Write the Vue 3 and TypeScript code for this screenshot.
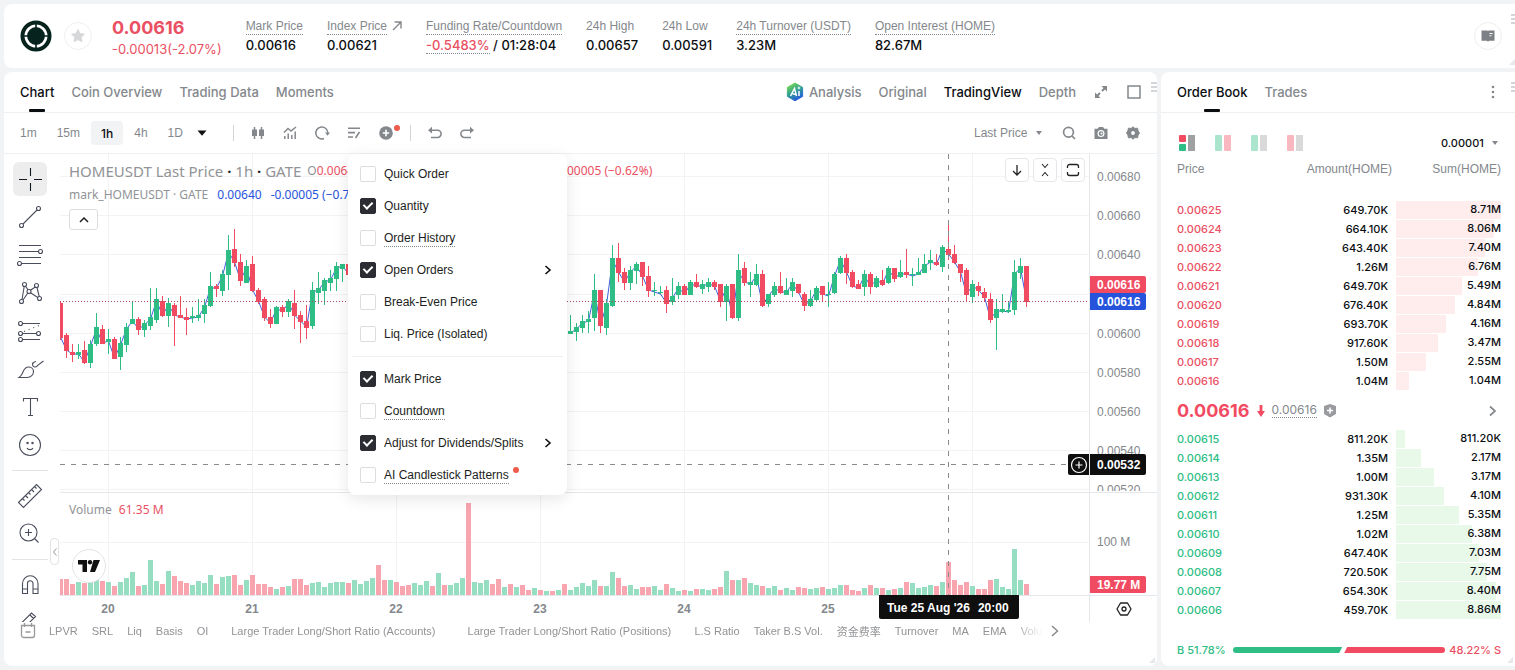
<script setup lang="ts">
import { ref } from 'vue'

type Candle = [dir: 'g' | 'r', top: number, bottom: number, high: number, low: number]

const PITCH = 6
const LAST_VISIBLE_START = 85

// Candle extents, in thirds of a pixel measured from 4px above the price pane.
const early: Candle[] = [
  ['r', 458, 564, 455, 570], ['r', 555, 602, 549, 624], ['r', 605, 615, 582, 636], ['g', 605, 615, 582, 628],
  ['r', 600, 638, 573, 641], ['g', 581, 639, 570, 654], ['g', 531, 582, 489, 587], ['r', 537, 582, 525, 582],
  ['g', 567, 576, 537, 612], ['r', 567, 627, 560, 627], ['g', 579, 621, 560, 660], ['g', 531, 584, 519, 605],
  ['g', 507, 522, 456, 522], ['r', 507, 540, 500, 555], ['g', 519, 540, 510, 560], ['g', 501, 528, 414, 540],
  ['g', 447, 510, 414, 518], ['r', 453, 498, 438, 500], ['g', 459, 498, 444, 530], ['r', 465, 498, 459, 588],
  ['r', 495, 503, 438, 503], ['r', 501, 510, 474, 555], ['g', 499, 504, 471, 519], ['g', 495, 504, 447, 513],
  ['g', 465, 492, 447, 518], ['g', 408, 467, 366, 470], ['r', 408, 417, 402, 440], ['g', 372, 423, 360, 438],
  ['g', 300, 375, 255, 420], ['r', 297, 339, 237, 350], ['r', 336, 393, 312, 408], ['g', 348, 399, 330, 399],
  ['r', 342, 423, 318, 426], ['r', 420, 457, 414, 462], ['r', 447, 504, 441, 513], ['r', 501, 522, 477, 534],
  ['g', 471, 522, 468, 522], ['r', 471, 486, 465, 500], ['g', 453, 486, 447, 500], ['r', 459, 498, 420, 536],
  ['r', 495, 515, 483, 579], ['r', 513, 534, 465, 567], ['g', 420, 528, 396, 537], ['g', 414, 428, 366, 462],
  ['g', 390, 423, 384, 465], ['g', 384, 398, 360, 423], ['g', 348, 386, 336, 423], ['g', 342, 357, 342, 396],
  ['r', 342, 375, 342, 390],
]
const late: Candle[] = [
  ['g', 543, 551, 495, 551], ['g', 531, 546, 519, 573], ['g', 512, 534, 495, 549], ['g', 507, 516, 483, 548],
  ['g', 420, 504, 372, 543], ['r', 420, 528, 420, 549], ['g', 459, 534, 447, 555], ['g', 324, 467, 285, 470],
  ['r', 324, 369, 279, 396], ['r', 366, 399, 354, 420], ['g', 360, 399, 348, 420], ['g', 342, 363, 336, 402],
  ['r', 336, 380, 336, 408], ['r', 378, 423, 348, 440], ['g', 419, 423, 396, 438], ['g', 426, 429, 408, 432],
  ['r', 420, 462, 408, 489], ['g', 438, 456, 384, 465], ['g', 408, 435, 396, 447], ['r', 408, 435, 402, 435],
  ['g', 396, 435, 390, 435], ['r', 396, 411, 372, 413], ['g', 402, 417, 390, 432], ['g', 396, 411, 384, 426],
  ['r', 396, 411, 390, 420], ['r', 402, 456, 402, 471], ['g', 408, 456, 402, 513], ['r', 402, 504, 402, 507],
  ['g', 360, 504, 312, 513], ['r', 354, 399, 336, 408], ['g', 395, 405, 366, 441], ['g', 372, 405, 342, 407],
  ['r', 372, 468, 360, 470], ['g', 432, 462, 432, 471], ['g', 408, 435, 396, 441], ['r', 408, 429, 366, 432],
  ['g', 420, 435, 384, 435], ['g', 396, 423, 384, 441], ['r', 402, 429, 402, 432], ['r', 432, 468, 426, 483],
  ['g', 447, 468, 420, 470], ['g', 414, 450, 408, 456], ['r', 408, 435, 408, 456], ['g', 431, 435, 396, 471],
  ['g', 372, 429, 366, 432], ['g', 324, 369, 318, 372], ['r', 324, 369, 312, 402], ['r', 366, 411, 360, 414],
  ['r', 402, 417, 390, 417], ['g', 372, 411, 360, 438], ['r', 372, 411, 366, 432], ['g', 384, 411, 378, 414],
  ['r', 390, 405, 360, 408], ['g', 354, 399, 348, 402], ['r', 354, 387, 354, 396], ['g', 366, 381, 330, 384],
  ['r', 366, 375, 297, 384], ['g', 371, 375, 354, 408], ['g', 366, 375, 324, 375], ['g', 342, 369, 312, 369],
  ['g', 330, 339, 300, 360], ['r', 336, 345, 312, 348], ['g', 291, 351, 285, 366], ['r', 297, 315, 222, 330],
  ['r', 312, 339, 285, 342], ['r', 342, 369, 342, 396], ['r', 360, 435, 354, 453], ['g', 402, 441, 390, 459],
  ['r', 408, 423, 396, 438], ['r', 426, 444, 414, 453], ['r', 447, 510, 429, 519], ['g', 477, 504, 447, 600],
  ['g', 477, 486, 432, 489], ['g', 481, 486, 456, 489], ['g', 366, 480, 330, 495], ['g', 348, 369, 324, 387],
  ['r', 348, 456, 348, 471],
]

const toY = (v: number) => Math.round(v / 3) - 4

function layout(series: Candle[], start: number) {
  return series.map(([dir, top, bottom, high, low], i) => ({
    dir,
    cx: (start + i) * PITCH,
    top: toY(top),
    height: Math.max(1, toY(bottom) - toY(top)),
    high: toY(high),
    low: toY(low),
  }))
}
const segments = [layout(early, 0), layout(late, LAST_VISIBLE_START)]
const candles = segments.flat()
const markLines = segments.map(s =>
  s.map(c => `${c.cx + 0.5},${c.dir === 'g' ? c.top + 2 : c.top + c.height - 1}`).join(' '),
)

const volumeHeights = [
  16, 16, 11, 13, 12, 13, 15, 14, 13, 9, 13, 17, 23, 9, 10, 35, 14, 11, 24, 19, 14, 12, 10, 14, 12, 20, 11, 18, 19, 20,
  10, 15, 20, 11, 11, 8, 6, 8, 9, 16, 16, 10, 12, 13, 8, 12, 13, 13, 12, 15, 11, 14, 17, 30, 15, 15, 13, 9, 10, 12,
  10, 14, 9, 22, 10, 10, 12, 17, 92, 13, 12, 15, 11, 16, 8, 11, 8, 10, 5, 7, 5, 4, 4, 5, 11, 5, 8, 12, 9, 15,
  9, 9, 23, 17, 9, 10, 6, 8, 8, 9, 5, 11, 7, 4, 5, 4, 6, 6, 5, 6, 8, 24, 15, 15, 17, 12, 10, 9, 7, 9,
  5, 7, 5, 8, 7, 6, 7, 8, 6, 7, 10, 10, 5, 4, 7, 10, 7, 7, 5, 6, 7, 13, 12, 7, 8, 10, 9, 13, 33, 15,
  10, 13, 9, 6, 6, 15, 16, 8, 6, 46, 15, 11,
]
const volumeDirs =
  'rrrgrggrgrgggrgggrgrrrggggrggrrgrrrrgrgrrrggggggrg' +
  'gggrrgrrrgggrgrgggrgggrrgrgrrgrgrgrgggggrggrrggrrg' +
  'grggrgrggrrgrgrggrggrggrrggrgggrrrgrgrgrgrggggrgrr' +
  'rrgrrrgggggr'
const volumes = volumeHeights.map((height, i) => ({ x: i * PITCH - 2, height, dir: volumeDirs[i] }))

const gridY = [22, 61, 100, 140, 179, 218, 257, 296, 335]
// 0.00620 is left out: the last-price tags cover its place.
const priceTicks = [
  { label: '0.00680', y: 22 }, { label: '0.00660', y: 61 }, { label: '0.00640', y: 100 }, { label: '0.00600', y: 179 },
  { label: '0.00580', y: 218 }, { label: '0.00560', y: 257 }, { label: '0.00540', y: 296 }, { label: '0.00520', y: 335 },
]
const days = [20, 21, 22, 23, 24, 25].map((label, i) => ({ label, x: 48 + i * 144 }))
const dayLines = [0, 1, 2, 3, 4, 5, 6].map(i => 48 + i * 144)

const asks = [
  ['0.00625', '649.70K', '8.71M', 100], ['0.00624', '664.10K', '8.06M', 93], ['0.00623', '643.40K', '7.40M', 85],
  ['0.00622', '1.26M', '6.76M', 78], ['0.00621', '649.70K', '5.49M', 63], ['0.00620', '676.40K', '4.84M', 56],
  ['0.00619', '693.70K', '4.16M', 48], ['0.00618', '917.60K', '3.47M', 40], ['0.00617', '1.50M', '2.55M', 29],
  ['0.00616', '1.04M', '1.04M', 12],
]
const bids = [
  ['0.00615', '811.20K', '811.20K', 9], ['0.00614', '1.35M', '2.17M', 24], ['0.00613', '1.00M', '3.17M', 36],
  ['0.00612', '931.30K', '4.10M', 46], ['0.00611', '1.25M', '5.35M', 60], ['0.00610', '1.02M', '6.38M', 72],
  ['0.00609', '647.40K', '7.03M', 79], ['0.00608', '720.50K', '7.75M', 87], ['0.00607', '654.30K', '8.40M', 95],
  ['0.00606', '459.70K', '8.86M', 100],
]

const menu = ref([
  [
    { label: 'Quick Order', on: false },
    { label: 'Quantity', on: true },
    { label: 'Order History', on: false, hint: true },
    { label: 'Open Orders', on: true, more: true },
    { label: 'Break-Even Price', on: false },
    { label: 'Liq. Price (Isolated)', on: false },
  ],
  [
    { label: 'Mark Price', on: true },
    { label: 'Countdown', on: false, hint: true },
    { label: 'Adjust for Dividends/Splits', on: true, more: true },
    { label: 'AI Candlestick Patterns', on: false, hint: true, dot: true },
  ],
] as { label: string; on: boolean; hint?: boolean; more?: boolean; dot?: boolean }[][])

const tabs = ['Chart', 'Coin Overview', 'Trading Data', 'Moments']
const intervals = ['1m', '15m', '1h', '4h', '1D']
const indicators = [
  { name: 'LPVR' }, { name: 'SRL' }, { name: 'Liq' }, { name: 'Basis' }, { name: 'OI' },
  { name: 'Large Trader Long/Short Ratio (Accounts)', wide: true },
  { name: 'Large Trader Long/Short Ratio (Positions)', wide: true },
  { name: 'L.S Ratio' }, { name: 'Taker B.S Vol.' }, { name: '资金费率' }, { name: 'Turnover' },
  { name: 'MA' }, { name: 'EMA' }, { name: 'Volume' },
]
</script>

<template>
  <div class="page">
    <header class="panel ticker">
      <svg class="coin" viewBox="0 0 32 32" width="32" height="32" aria-hidden="true">
        <circle cx="16" cy="16" r="15.5" fill="#06231d" />
        <circle cx="16" cy="16" r="10.2" fill="none" stroke="#fff" stroke-width="2.6" />
        <path d="M16 3.5v6M16 22.5v6M3.5 16h6M22.500 16h6" stroke="#06231d" stroke-width="1.6" />
      </svg>
      <button class="round star" aria-label="Favourite">
        <svg viewBox="0 0 16 16" width="16" height="16"><path d="M8 1.6l1.9 4 4.4.6-3.2 3.1.8 4.4L8 11.6l-3.9 2.1.8-4.4L1.7 6.2l4.4-.6z" fill="#d6d7d9" stroke="#d6d7d9" stroke-linejoin="round" /></svg>
      </button>
      <div class="last">
        <strong>0.00616</strong>
        <span>-0.00013(-2.07%)</span>
      </div>
      <dl class="stats">
        <div><dt><span class="hint">Mark Price</span></dt><dd>0.00616</dd></div>
        <div>
          <dt><span class="hint">Index Price</span>
            <svg class="ne" viewBox="0 0 10 10" width="10" height="10"><path d="M1 9L9 1M2.6 1H9v6.4" fill="none" stroke="#84888c" stroke-width="1.4" /></svg>
          </dt>
          <dd>0.00621</dd>
        </div>
        <div><dt><span class="hint">Funding Rate/Countdown</span></dt><dd><span class="hint red">-0.5483%</span> / 01:28:04</dd></div>
        <div><dt><span>24h High</span></dt><dd>0.00657</dd></div>
        <div><dt><span>24h Low</span></dt><dd>0.00591</dd></div>
        <div><dt><span class="hint">24h Turnover (USDT)</span></dt><dd>3.23M</dd></div>
        <div><dt><span class="hint">Open Interest (HOME)</span></dt><dd>82.67M</dd></div>
      </dl>
      <button class="round guide" aria-label="Guide">
        <svg viewBox="0 0 14 14" width="14" height="14"><path d="M.5 1.500h5.800l.7.6.7-.6h5.800v10.200H8.200l-1.200 1-1.200-1H.5z" fill="#7d8084" /><path d="M8.500 4.500h3.200M8.500 6.800h2" stroke="#fff" /></svg>
      </button>
      <i class="grip"></i><i class="corner"></i>
    </header>

    <main class="columns">
      <section class="panel chart-panel">
        <nav class="bar tabs">
          <a v-for="(t, i) in tabs" :key="t" href="#" class="tab" :class="{ active: i === 0 }">{{ t }}</a>
          <div class="views">
            <a href="#" class="analysis">
              <svg viewBox="0 0 18 20" width="18" height="20">
                <defs><linearGradient id="ai" x1="0.2" y1="0" x2="0.7" y2="1"><stop offset="0" stop-color="#7bdc4e" /><stop offset=".5" stop-color="#2e9d95" /><stop offset="1" stop-color="#2353e8" /></linearGradient></defs>
                <path d="M9 1l7.6 4.4v9L9 18.8l-7.6-4.4v-9z" fill="url(#ai)" stroke="url(#ai)" stroke-linejoin="round" />
                <path d="M4.5 14L8.5 6.500 10.500 14M6.500 11.800l3.500.6M13 9V14" fill="none" stroke="#fff" stroke-width="1.500" />
                <path d="M13 4l.6 1.400 1.400.6-1.400.6L13 8l-.6-1.400L11 6l1.400-.6z" fill="#fff" />
              </svg>Analysis</a>
            <a href="#">Original</a>
            <a href="#" class="on">TradingView</a>
            <a href="#">Depth</a>
            <button class="plain" aria-label="Expand"><svg viewBox="0 0 14 14" width="14" height="14"><path d="M7.500 1H13v5.500zM1 7.500V13h5.500z" fill="#84888c" /><path d="M11.500 2.500L8 6M2.500 11.500L6 8" stroke="#84888c" stroke-width="2" /></svg></button>
            <button class="plain" aria-label="Layout"><svg viewBox="0 0 14 14" width="14" height="14"><rect x="1" y="1" width="12" height="12" fill="none" stroke="#84888c" stroke-width="1.500" /></svg></button>
          </div>
          <i class="grip"></i>
        </nav>

        <div class="bar toolbar">
          <button v-for="t in intervals" :key="t" class="interval" :class="{ active: t === '1h' }">{{ t }}</button>
          <button class="icon caret" aria-label="More intervals"><svg width="10" height="6" viewBox="0 0 10 6"><path d="M.5.500h9L5 5.800z" fill="#111" /></svg></button>
          <i class="sep"></i>
          <button class="icon" aria-label="Chart type"><svg width="16" height="16" viewBox="0 0 16 16"><path d="M4.500 2v12M11.500 2v12" stroke="#84888c" stroke-width="1.500" /><path d="M2 4.500h5v6.500H2zM9 4.500h5v6.500H9z" fill="#84888c" /></svg></button>
          <button class="icon" aria-label="Indicators"><svg width="16" height="16" viewBox="0 0 16 16"><path d="M2 7.500l4-4 3 2.500L14 2M2.800 14v-3M6.200 14V8.500M9.800 14V10M13.200 14V6.500" fill="none" stroke="#84888c" stroke-width="1.500" /></svg></button>
          <button class="icon" aria-label="Replay"><svg width="16" height="16" viewBox="0 0 16 16"><path d="M10 13.500A6 6 0 1 1 13.800 8" fill="none" stroke="#84888c" stroke-width="1.500" /><path d="M11 7.500h5L13.500 10.800z" fill="#84888c" /></svg></button>
          <button class="icon" aria-label="Orders"><svg width="16" height="16" viewBox="0 0 16 16"><path d="M2 3.200h12M2 7.600h7M2 12h5M13.500 7l-4 6" fill="none" stroke="#84888c" stroke-width="1.600" /></svg></button>
          <button class="icon dotted" aria-label="Chart overlays"><svg width="16" height="16" viewBox="0 0 16 16"><circle cx="8" cy="8" r="6.800" fill="#84888c" /><path d="M8 4.800v6.400M4.800 8h6.400" stroke="#fff" stroke-width="1.600" /></svg></button>
          <i class="sep"></i>
          <button class="icon" aria-label="Undo"><svg width="16" height="16" viewBox="0 0 16 16"><path d="M3 5.200h7.500a3.600 3.600 0 0 1 0 7.300H4" fill="none" stroke="#84888c" stroke-width="1.600" /><path d="M5 1.800v6.800L1 5.200z" fill="#84888c" /></svg></button>
          <button class="icon" aria-label="Redo"><svg width="16" height="16" viewBox="0 0 16 16"><path d="M13 5.200H5.500a3.600 3.600 0 0 0 0 7.300H12" fill="none" stroke="#84888c" stroke-width="1.600" /><path d="M11 1.800v6.800l4-3.400z" fill="#84888c" /></svg></button>
          <label class="drop price-kind">
            <select aria-label="Price source"><option>Last Price</option></select>
            <svg width="6" height="4" viewBox="0 0 6 4"><path d="M0 0h6L3 4z" fill="#84888c" /></svg>
          </label>
          <button class="icon" aria-label="Search"><svg width="16" height="16" viewBox="0 0 16 16"><circle cx="7.500" cy="7.300" r="4.900" fill="none" stroke="#84888c" stroke-width="1.700" /><path d="M11 11l3 3" stroke="#84888c" stroke-width="1.700" /></svg></button>
          <button class="icon" aria-label="Snapshot"><svg width="16" height="16" viewBox="0 0 16 16"><path d="M1.500 3.800h3.200L6 2h4l1.300 1.800h3.200V14h-13z" fill="#84888c" /><circle cx="8" cy="8.600" r="2.900" fill="none" stroke="#fff" stroke-width="1.200" /><circle cx="8.500" cy="8.600" r="1" fill="#fff" /></svg></button>
          <button class="icon" aria-label="Settings"><svg width="16" height="16" viewBox="0 0 16 16"><path d="M8 1.800l1.800 1.600 2.800-.2.500 2.700L14.500 8l-1.400 2.100-.5 2.700-2.800-.2L8 14.200l-1.800-1.600-2.800.2-.5-2.700L1.500 8l1.400-2.100.5-2.700 2.800.2z" fill="#84888c" stroke="#84888c" stroke-linejoin="round" /><circle cx="8" cy="8" r="1.900" fill="#fff" /></svg></button>
        </div>

        <div class="workspace">
          <aside class="tools">
            <button class="tool" aria-label="Cross"><svg class="picked" width="34" height="34" viewBox="0 0 34 34"><path d="M17.500 6v8M17.500 21v8M6 17.500h8M21 17.500h8" stroke="#131722" /></svg></button>
            <button class="tool" aria-label="Trend line"><svg width="28" height="28" viewBox="0 0 28 28"><circle cx="22.500" cy="5.500" r="2" /><circle cx="5.500" cy="22.500" r="2" /><path d="M7 21L21 7" /></svg></button>
            <button class="tool" aria-label="Levels"><svg width="28" height="28" viewBox="0 0 28 28"><path d="M3 4.500h22M3 10.500h19.500M3 16.500h22M5.500 22.500H25" /><circle cx="24.500" cy="10.500" r="2" /><circle cx="3.500" cy="22.500" r="2" /></svg></button>
            <button class="tool" aria-label="Patterns"><svg width="28" height="28" viewBox="0 0 28 28"><circle cx="8.500" cy="5.500" r="2" /><circle cx="20.500" cy="6.500" r="2" /><circle cx="5.500" cy="22.500" r="2" /><circle cx="23.500" cy="19.500" r="2" /><circle cx="13" cy="12.500" r="2" /><path d="M8.200 7.500L6 20.500M9.500 7.300l2.600 3.600M19.300 8l-4.900 3.300M21 8.500l2.200 9M14.500 13.800l7.300 4.700M11.800 14L7 21" /></svg></button>
            <button class="tool" aria-label="Forecast"><svg width="28" height="28" viewBox="0 0 28 28"><path d="M6.500 6.500H24M6.500 16.500h14M6.500 22.500H24" /><circle cx="4.500" cy="6.500" r="2" /><circle cx="4.500" cy="16.500" r="2" /><circle cx="22.500" cy="16.500" r="2" /><circle cx="4.500" cy="22.500" r="2" /><path d="M8 14.500l15-6" stroke-dasharray="1 4" /></svg></button>
            <button class="tool" aria-label="Brush"><svg width="28" height="28" viewBox="0 0 28 28"><path d="M3 22.500h8c4 0 6.500-3 6.500-6S15 12 12.500 12C8 12 7.500 16.500 6 19c-1 1.800-2 2.800-3 3.500zM17 7.500c-1 1.500-.5 4 1.500 4.500 2 .3 3-1 3.500-2l5.500-4M17 8.500c.5-1.500 1.500-1.800 3-2" /></svg></button>
            <button class="tool" aria-label="Text"><svg width="28" height="28" viewBox="0 0 28 28"><path d="M7.500 8.500v-3h14v3M14.500 5.500v17M12 22.500h5" /></svg></button>
            <button class="tool" aria-label="Emoji"><svg width="28" height="28" viewBox="0 0 28 28"><circle cx="14" cy="14" r="10.500" /><path d="M11 17c1 2.200 5 2.200 6 0" /><circle cx="11.500" cy="12" r=".7" /><circle cx="16.500" cy="12" r=".7" /></svg></button>
            <hr />
            <button class="tool" aria-label="Measure"><svg width="28" height="28" viewBox="0 0 28 28"><path d="M2.500 20.500l18-18 5 5-18 18zM6.500 16.500l2 2M9.500 13.500l2.500 2.500M12.500 10.500l2 2M15.500 7.500L18 10M18.500 4.500l2 2" /></svg></button>
            <button class="tool" aria-label="Zoom in"><svg width="28" height="28" viewBox="0 0 28 28"><circle cx="12.500" cy="12.500" r="8.500" /><path d="M18.500 18.500l4 4M12.500 9v7M9 12.500h7" /></svg></button>
            <hr />
            <button class="tool" aria-label="Magnet"><svg width="28" height="28" viewBox="0 0 28 28"><path d="M6.500 22.500v-10a7.500 7.500 0 0 1 15.500 0v10h-5v-10a2.600 2.600 0 0 0-5.500 0v10zM6.500 18h5M17 18h5" /></svg></button>
            <button class="tool" aria-label="Lock drawing"><svg width="28" height="28" viewBox="0 0 28 28"><path d="M5 14.500L15.500 4l4 3.500L9.500 17.500M14 6l3.500 3.500M17 14.500h5" /></svg></button>
          </aside>

          <div class="plot">
            <svg class="canvas" width="100%" height="442">
              <g class="grid">
                <path v-for="x in dayLines" :key="x" :d="`M${x + 0.5} 0V441`" />
                <line v-for="y in gridY" :key="y" x1="0" x2="100%" :y1="y + 0.5" :y2="y + 0.5" />
                <line x1="0" x2="100%" y1="388.500" y2="388.500" />
              </g>
              <rect v-for="(v, i) in volumes" :key="'v' + i" :x="v.x" :y="441 - v.height" width="5" :height="v.height" :class="'vol-' + v.dir" />
              <line class="edge" x1="0" x2="100%" y1="338.500" y2="338.500" />
              <line class="edge" x1="0" x2="100%" y1="441.500" y2="441.500" />
              <polyline v-for="(p, i) in markLines" :key="'m' + i" :points="p" class="mark" />
              <g v-for="(c, i) in candles" :key="'c' + i" :class="'candle-' + c.dir">
                <rect :x="c.cx" :y="c.high" width="1" :height="c.low - c.high" />
                <rect :x="c.cx - 2" :y="c.top" width="5" :height="c.height" />
              </g>
              <line class="last-line" x1="0" x2="100%" y1="147.500" y2="147.500" />
              <line class="cross" x1="0" x2="100%" y1="310.500" y2="310.500" />
              <path class="cross" d="M888.500 0V441" />
            </svg>
            <div class="legend">
              <p class="series"><span>HOMEUSDT Last Price <b>·</b> 1h <b>·</b> GATE</span><em>O<i class="red">0.00644</i></em></p>
              <p class="study"><span>mark_HOMEUSDT · GATE</span><i class="blue">0.00640</i><i class="blue">-0.00005 (−0.78%)</i></p>
              <button class="fold" aria-label="Collapse legend"><svg width="10" height="6" viewBox="0 0 10 6"><path d="M1 5l4-4 4 4" fill="none" stroke="#222" stroke-width="1.500" /></svg></button>
            </div>
            <p class="change red">−0.00005 (−0.62%)</p>
            <p class="volume-legend">Volume <i class="red">61.35 M</i></p>
            <a href="#" class="tv" aria-label="Charting library"><svg width="22" height="12" viewBox="0 0 22 12"><path d="M0 0h9v12H4.500V4.500H0zM15.500 0H22l-5 12h-5z" fill="#111" /><circle cx="12" cy="2.300" r="2.200" fill="#111" /></svg></a>
            <div class="pane-buttons">
              <button aria-label="Move down"><svg width="14" height="14" viewBox="0 0 14 14"><path d="M7 2v10M3 8l4 4 4-4" fill="none" stroke="#222" stroke-width="1.300" /></svg></button>
              <button aria-label="Collapse pane"><svg width="14" height="14" viewBox="0 0 14 14"><path d="M4 1l3 3.500L10 1M4 13l3-3.500L10 13" fill="none" stroke="#222" stroke-width="1.100" /></svg></button>
              <button aria-label="Maximise pane"><svg width="14" height="14" viewBox="0 0 14 14"><path d="M1.500 5V3.500a2 2 0 0 1 2-2h7a2 2 0 0 1 2 2V5M1.500 9v1.500a2 2 0 0 0 2 2h7a2 2 0 0 0 2-2V9" fill="none" stroke="#222" stroke-width="1.300" /></svg></button>
            </div>
            <button class="add-alert" aria-label="Add at price"><svg width="18" height="18" viewBox="0 0 18 18"><circle cx="9" cy="9" r="7.500" fill="none" stroke="#fff" stroke-width="1.200" /><path d="M9 5.500v7M5.500 9h7" stroke="#fff" stroke-width="1.200" /></svg></button>
            <svg class="time-axis" width="100%" height="26">
              <text v-for="d in days" :key="d.label" :x="d.x" y="17" text-anchor="middle">{{ d.label }}</text>
            </svg>
            <div class="time-tag"><span>Tue 25 Aug '26</span><span>20:00</span></div>
            <button class="collapse" aria-label="Hide tools"><svg width="4" height="8" viewBox="0 0 4 8"><path d="M3.500.500l-3 3.500 3 3.500" fill="none" stroke="#999" /></svg></button>
          </div>

          <div class="axis">
            <svg class="scale" width="100%" height="442">
              <defs><clipPath id="price-pane"><rect width="100" height="337" /></clipPath></defs>
              <g clip-path="url(#price-pane)"><text v-for="t in priceTicks" :key="t.label" x="7" :y="t.y + 5">{{ t.label }}</text></g>
              <text x="7" y="392">100 M</text>
              <line class="edge" x1="0" x2="100%" y1="338.500" y2="338.500" />
              <line class="edge" x1="0" x2="100%" y1="441.500" y2="441.500" />
            </svg>
            <span class="tag last-tag">0.00616</span>
            <span class="tag mark-tag">0.00616</span>
            <span class="tag cross-tag">0.00532</span>
            <span class="tag vol-tag">19.77 M</span>
            <button class="axis-settings" aria-label="Axis settings"><svg width="16" height="14" viewBox="0 0 16 14"><path d="M4.500 1h7L15 7l-3.500 6h-7L1 7z" fill="none" stroke="#222" stroke-width="1.300" stroke-linejoin="round" /><circle cx="8" cy="7" r="2" fill="none" stroke="#222" stroke-width="1.300" /></svg></button>
          </div>

          <div class="menu">
            <div v-for="(group, g) in menu" :key="g" class="group">
              <label v-for="item in group" :key="item.label" class="item">
                <input v-model="item.on" type="checkbox" />
                <span :class="{ hint: item.hint }">{{ item.label }}</span>
                <i v-if="item.dot" class="new-dot"></i>
                <svg v-if="item.more" class="more" width="8" height="10" viewBox="0 0 8 10"><path d="M1.500 1l4.500 4-4.500 4" fill="none" stroke="#111" stroke-width="1.600" /></svg>
              </label>
            </div>
          </div>
        </div>

        <footer class="indicators">
          <svg class="calendar" width="16" height="16" viewBox="0 0 16 16"><path d="M1.500 2.500h13v10a2 2 0 0 1-2 2h-9a2 2 0 0 1-2-2zM4.500 0v4M11.500 0v4M5.500 9h5" fill="none" stroke="#999" stroke-width="1.300" /></svg>
          <div class="indicator-list">
            <button v-for="n in indicators" :key="n.name" :class="{ wide: n.wide }">{{ n.name }}</button>
          </div>
          <button class="next" aria-label="More indicators"><svg width="8" height="12" viewBox="0 0 8 12"><path d="M1 1l5.500 5L1 11" fill="none" stroke="#84888c" stroke-width="1.400" /></svg></button>
        </footer>
        <i class="corner"></i>
      </section>

      <section class="panel book">
        <nav class="bar tabs">
          <a href="#" class="tab active">Order Book</a>
          <a href="#" class="tab">Trades</a>
          <button class="plain kebab" aria-label="More"><svg width="4" height="14" viewBox="0 0 4 14"><g fill="#84888c"><circle cx="2" cy="2" r="1.300" /><circle cx="2" cy="7" r="1.300" /><circle cx="2" cy="12" r="1.300" /></g></svg></button>
          <i class="grip"></i>
        </nav>
        <div class="modes">
          <button aria-label="Both sides"><svg width="16" height="16" viewBox="0 0 16 16"><rect width="7" height="7" rx="1" fill="#f14b62" /><rect y="9" width="7" height="7" rx="1" fill="#2ebd85" /><rect x="9" width="7" height="16" fill="#9fa1a3" /></svg></button>
          <button aria-label="Split"><svg width="16" height="16"><rect width="7" height="16" rx="1" fill="#abe5ce" /><rect x="9" width="7" height="16" rx="1" fill="#f9b7c0" /></svg></button>
          <button aria-label="Bids"><svg width="16" height="16"><rect width="7" height="16" rx="1" fill="#abe5ce" /><rect x="9" width="7" height="16" fill="#d9d9da" /></svg></button>
          <button aria-label="Asks"><svg width="16" height="16"><rect width="7" height="16" rx="1" fill="#f9b7c0" /><rect x="9" width="7" height="16" fill="#d9d9da" /></svg></button>
          <label class="drop step">
            <select aria-label="Price step"><option>0.00001</option></select>
            <svg width="6" height="4" viewBox="0 0 6 4"><path d="M0 0h6L3 4z" fill="#84888c" /></svg>
          </label>
        </div>
        <table class="depth asks">
          <thead><tr><th>Price</th><th>Amount(HOME)</th><th>Sum(HOME)</th></tr></thead>
          <tbody>
            <tr v-for="r in asks" :key="r[0]"><td>{{ r[0] }}</td><td>{{ r[1] }}</td><td><div class="cell"><i :style="{ width: r[3] + '%' }"></i><span>{{ r[2] }}</span></div></td></tr>
          </tbody>
        </table>
        <div class="mid">
          <strong>0.00616</strong>
          <svg width="8" height="12" viewBox="0 0 8 12"><path d="M2.600 0h2.800v6H8l-4 6-4-6h2.600z" fill="#f14b62" /></svg>
          <span class="hint">0.00616</span>
          <svg class="shield" width="12" height="14" viewBox="0 0 12 14"><path d="M6 0l6 2v8l-6 3.600L0 10V2z" fill="#999b9e" /><path d="M6 3.500v6M3 6.500h6" stroke="#fff" stroke-width="1.600" /></svg>
          <svg class="open" width="8" height="12" viewBox="0 0 8 12"><path d="M1 1.500L6 6l-5 4.500" fill="none" stroke="#84888c" stroke-width="1.700" /></svg>
        </div>
        <table class="depth bids">
          <tbody>
            <tr v-for="r in bids" :key="r[0]"><td>{{ r[0] }}</td><td>{{ r[1] }}</td><td><div class="cell"><i :style="{ width: r[3] + '%' }"></i><span>{{ r[2] }}</span></div></td></tr>
          </tbody>
        </table>
        <div class="ratio">
          <span class="green">B 51.78%</span>
          <div class="track"><i class="buy"></i><i class="sell"></i></div>
          <span class="red">48.22% S</span>
        </div>
        <i class="corner"></i>
      </section>
    </main>
  </div>
</template>

<style>
body {
  margin: 0;
  background: #f2f3f4;
}
</style>

<style scoped>
.page {
  display: flex;
  flex-direction: column;
  gap: 4px;
  min-height: 100vh;
  box-sizing: border-box;
  padding: 4px 0 4px 4px;
  overflow: hidden;
  font-family: "Liberation Sans", Arial, "Noto Sans CJK SC", sans-serif;
  font-size: 12px;
  color: #0b0e11;
}
.last, .stats dd, .tabs, .interval.active, .step, .depth td, .mid, .ratio {
  font-family: Inter, sans-serif;
}
button, select {
  border: 0;
  padding: 0;
  margin: 0;
  background: none;
  font: inherit;
  color: inherit;
}
a { color: inherit; text-decoration: none; }
p, dl, dd { margin: 0; }
i, em { font-style: normal; }
svg { display: block; flex: none; }
.red { color: #ea4f62; }
.green { color: #2ebd85; }
.blue { color: #2653dc; }
.hint { border-bottom: 1px dotted #84888c; }
.panel {
  position: relative;
  background: #fff;
  border-radius: 8px;
}
.grip {
  position: absolute;
  top: 10px;
  right: 0;
  width: 6px;
  height: 10px;
  background: repeating-linear-gradient(#d3d6da 0 2px, transparent 2px 4px);
}
.corner {
  position: absolute;
  right: 2px;
  bottom: 3px;
  border: 3px solid transparent;
  border-right-color: #e6e8ec;
  border-bottom-color: #e6e8ec;
}

.ticker {
  display: flex;
  align-items: center;
  height: 64px;
  padding: 0 13px 0 16px;
  border-radius: 8px 0 0 8px;
}
.ticker .grip { width: 4px; }
.ticker .corner { right: 0; }
.round {
  display: flex;
  align-items: center;
  justify-content: center;
  width: 28px;
  height: 28px;
  border: 1px solid #eeeff0;
  border-radius: 50%;
}
.star { margin: 0 20px 0 12px; }
.guide { margin-left: auto; }
.last {
  display: flex;
  flex-direction: column;
  margin-right: 24px;
  padding-top: 2px;
  color: #ea4f62;
}
.last strong { font-size: 18px; line-height: 24px; font-weight: 700; }
.last span { font-size: 13px; line-height: 18px; }
.stats { display: flex; gap: 24px; }
.stats dt {
  display: flex;
  align-items: center;
  gap: 5px;
  height: 18px;
  line-height: 16px;
  color: #84888c;
}
.stats dd { height: 18px; line-height: 17px; margin-top: 2px; font-weight: 500; font-size: 13px; white-space: nowrap; }
.stats dd .hint { display: inline-block; line-height: 16px; }

.columns {
  display: grid;
  grid-template-columns: minmax(0, 1fr) 354px;
  gap: 4px;
  flex: 1;
}
.bar {
  position: relative;
  display: flex;
  align-items: center;
  height: 40px;
  border-bottom: 1px solid #eff0f1;
}
.tabs { padding: 0 15px 0 16px; gap: 17px; font-size: 13px; font-weight: 500; color: #84888c; }
.tab { position: relative; line-height: 40px; }
.tab.active { color: #0b0e11; }
.tab.active::after {
  content: "";
  position: absolute;
  left: 50%;
  bottom: 0;
  width: 16px;
  height: 3px;
  margin-left: -8px;
  border-radius: 1px;
  background: #0b0e11;
}
.views { display: flex; align-items: center; gap: 17px; margin-left: auto; }
.views .on { color: #0b0e11; }
.analysis { display: flex; align-items: center; gap: 5px; }
.plain { display: flex; align-items: center; justify-content: center; }
.views .plain { width: 16px; }

.toolbar { padding: 0 8px 0 6px; color: #84888c; }
.interval { height: 24px; padding: 0 10px; border-radius: 4px; }
.interval.active { margin: 0 1px; background: #f2f3f4; color: #0b0e11; font-weight: 500; }
.icon { display: flex; align-items: center; justify-content: center; width: 32px; height: 32px; position: relative; flex: none; }
.icon.caret { width: 18px; margin-right: 14px; }
.sep { width: 1px; height: 16px; margin: 0 8px; background: #d3d5d7; flex: none; }
.dotted::after {
  content: "";
  position: absolute;
  top: 8px;
  right: 2px;
  width: 6px;
  height: 6px;
  border-radius: 50%;
  background: #ee5a4c;
}
.drop { display: flex; align-items: center; gap: 8px; }
.drop select { appearance: none; outline: 0; }
.price-kind { margin: 0 11px 0 auto; }

.workspace {
  position: relative;
  display: grid;
  grid-template-columns: 56px minmax(0, 1fr) 68px;
  height: 468px;
}
.tools {
  display: flex;
  flex-direction: column;
  height: 462px;
  padding-top: 6px;
  overflow: hidden;
}
.tool {
  display: flex;
  align-items: center;
  justify-content: center;
  flex: none;
  width: 52px;
  height: 38px;
}
.tool svg { fill: none; stroke: #4a4e5c; stroke-width: 1.1; }
.tool .picked { background: #ededee; border-radius: 6px; }
.tools hr { flex: none; width: 36px; height: 1px; margin: 6px 8px; border: 0; background: #e2e3e6; }
.plot { position: relative; }
.grid { stroke: #f3f3f4; }
.edge { stroke: #e6e7ea; }
.mark { fill: none; stroke: #3f5fd8; }
.candle-g { fill: #2ebd85; }
.candle-r { fill: #f14b62; }
.vol-g { fill: #96dec2; }
.vol-r { fill: #f8a5b0; }
.last-line { stroke: #b0475c; stroke-dasharray: 1 2; }
.cross { stroke: #8a8a8a; stroke-dasharray: 5 6; }
.legend {
  position: absolute;
  left: 9px;
  top: 5px;
  color: #919396;
  font-family: "Noto Sans", sans-serif;
  white-space: nowrap;
}
.legend p { display: flex; line-height: 24px; }
.series { font-size: 15px; gap: 6px; }
.series b { color: #222; }
.series em { font-size: 12px; }
.study { font-size: 12px; gap: 9px; }
.fold {
  display: flex;
  align-items: center;
  justify-content: center;
  width: 29px;
  height: 21px;
  margin-top: 2px;
  border: 1px solid #dcdde0;
  border-radius: 3px;
  background: #fff;
}
.change, .volume-legend { position: absolute; font: 12px/24px "Noto Sans", sans-serif; white-space: nowrap; }
.change { left: 490px; top: 5px; }
.volume-legend { left: 9px; top: 344px; color: #919396; }
.volume-legend i { margin-left: 4px; }
.tv {
  position: absolute;
  left: 12px;
  top: 395px;
  display: flex;
  align-items: center;
  justify-content: center;
  width: 32px;
  height: 32px;
  border: 1px solid #e2e3e6;
  border-radius: 50%;
  background: #fff;
}
.pane-buttons { position: absolute; right: 4px; top: 4px; display: flex; gap: 4px; }
.pane-buttons button {
  display: flex;
  align-items: center;
  justify-content: center;
  width: 24px;
  height: 24px;
  border: 1px solid #e6e7ea;
  border-radius: 4px;
  background: #fff;
}
.add-alert {
  position: absolute;
  right: 0;
  top: 300px;
  display: flex;
  align-items: center;
  justify-content: center;
  width: 21px;
  height: 21px;
  border-radius: 2px 0 0 2px;
  background: #0f0f0f;
}
.time-axis text, .scale text { font: 12px "Liberation Sans", Arial, sans-serif; fill: #84888c; }
.time-axis text { font-weight: 700; }
.time-tag {
  position: absolute;
  left: 819px;
  top: 441px;
  display: flex;
  gap: 8px;
  padding: 1px 10px 0 8px;
  border-radius: 0 0 2px 2px;
  background: #0f0f0f;
  color: #fff;
  font: 700 12px/23px "Liberation Sans", Arial, sans-serif;
  white-space: nowrap;
}
.time-tag { padding-top: 2px; line-height: 22px; }
.collapse {
  position: absolute;
  left: -10px;
  top: 384px;
  display: flex;
  align-items: center;
  justify-content: center;
  width: 9px;
  height: 27px;
  border: 1px solid #e2e3e6;
  border-radius: 4px;
  background: #fff;
}
.axis { position: relative; border-left: 1px solid #e6e7ea; }
.tag {
  position: absolute;
  left: 0;
  padding: 1px 6px 0 7px;
  border-radius: 0 2px 2px 0;
  color: #fff;
  font: 700 12px/16px "Liberation Sans", Arial, sans-serif;
}
.last-tag { top: 122px; background: #f14b62; }
.mark-tag { top: 139px; background: #2653dc; }
.cross-tag { top: 300px; line-height: 20px; background: #0f0f0f; }
.vol-tag { top: 422px; background: #f14b62; }
.axis-settings { position: absolute; left: 26px; bottom: 6px; }

.menu {
  position: absolute;
  left: 344px;
  top: 0;
  width: 219px;
  box-sizing: border-box;
  padding: 4px;
  border-radius: 8px;
  background: #fff;
  box-shadow: 0 4px 16px rgba(0, 0, 0, 0.1);
}
.group + .group { margin-top: 6px; padding-top: 6px; border-top: 1px solid #f0f0f1; }
.item { display: flex; align-items: center; height: 32px; padding: 0 11px 0 8px; color: #1c1e21; white-space: nowrap; }
.item span { line-height: 16px; }
.item input {
  appearance: none;
  position: relative;
  width: 16px;
  height: 16px;
  margin: 0 8px 0 0;
  border: 1px solid #dcdde0;
  border-radius: 2px;
  background: #fff;
}
.item input:checked { background: #2c2d33; border-color: #2c2d33; }
.item input:checked::after {
  content: "";
  position: absolute;
  left: 4px;
  top: 1px;
  width: 4px;
  height: 7px;
  border: solid #fff;
  border-width: 0 2px 2px 0;
  transform: rotate(45deg);
}
.more { margin-left: auto; }
.new-dot { width: 6px; height: 6px; margin: 0 0 10px 4px; border-radius: 50%; background: #ee5a4c; }

.indicators { display: flex; align-items: center; height: 18px; padding-left: 16px; color: #919396; font-size: 11px; }
.indicator-list {
  display: flex;
  gap: 14px;
  width: 994px;
  margin-left: 13px;
  overflow: hidden;
  white-space: nowrap;
  mask-image: linear-gradient(90deg, #000 97%, transparent);
}
.indicator-list button { flex: none; }
.indicator-list .wide { width: 222px; }
.next { margin-left: 8px; }

.book { border-radius: 8px 0 0 8px; }
.book .tabs { padding-right: 20px; }
.kebab { margin-left: auto; }
.book .grip { width: 4px; }
.modes { display: flex; align-items: center; gap: 20px; height: 20px; padding: 20px 17px 0 18px; }
.step { margin-left: auto; font-weight: 500; font-size: 11px; }
.depth { width: 340px; table-layout: fixed; border-collapse: collapse; }
.depth thead tr { height: 48px; }
.depth th { padding: 9px 0 0; color: #84888c; font-weight: 400; text-align: right; vertical-align: top; line-height: 15px; }
.depth td { height: 19px; padding: 0; text-align: right; vertical-align: top; font-weight: 500; font-size: 11px; line-height: 18px; }
.depth th:first-child, .depth td:first-child { width: 100px; padding-left: 16px; text-align: left; }
.depth td:nth-child(2) { padding-right: 8px; }
.depth th:nth-child(2) { padding-right: 4px; }
.depth th:nth-child(3), .depth td:nth-child(3) { width: 105px; }
.asks td:first-child { color: #ea4f62; }
.bids td:first-child { color: #2ebd85; }
.cell { position: relative; height: 18px; line-height: 16px; margin-bottom: 1px; }
.cell i { position: absolute; left: 0; top: 0; height: 18px; background: #feedec; }
.bids .cell i { background: #e8f9ea; }
.cell span { position: relative; }
.mid { display: flex; align-items: center; gap: 7px; height: 39px; padding: 0 18px 0 16px; color: #84888c; }
.mid strong { color: #f14b62; font-size: 18px; }
.mid .hint { font-size: 12px; line-height: 15px; margin-bottom: 2px; }
.mid .open { margin-left: auto; }
.ratio { display: flex; align-items: center; gap: 4px; margin: 21px 14px 0 16px; height: 18px; font-size: 11px; font-weight: 500; }
.ratio span { min-width: 52px; white-space: nowrap; }
.ratio .red { text-align: right; }
.track { display: flex; flex: 1; gap: 2px; height: 6px; }
.buy, .sell { display: block; height: 6px; }
.buy { flex: 52; background: #2ebd85; border-radius: 3px 0 0 3px; clip-path: polygon(0 0, 100% 0, calc(100% - 3px) 100%, 0 100%); }
.sell { flex: 48; background: #f14b62; border-radius: 0 3px 3px 0; clip-path: polygon(3px 0, 100% 0, 100% 100%, 0 100%); }
</style>
